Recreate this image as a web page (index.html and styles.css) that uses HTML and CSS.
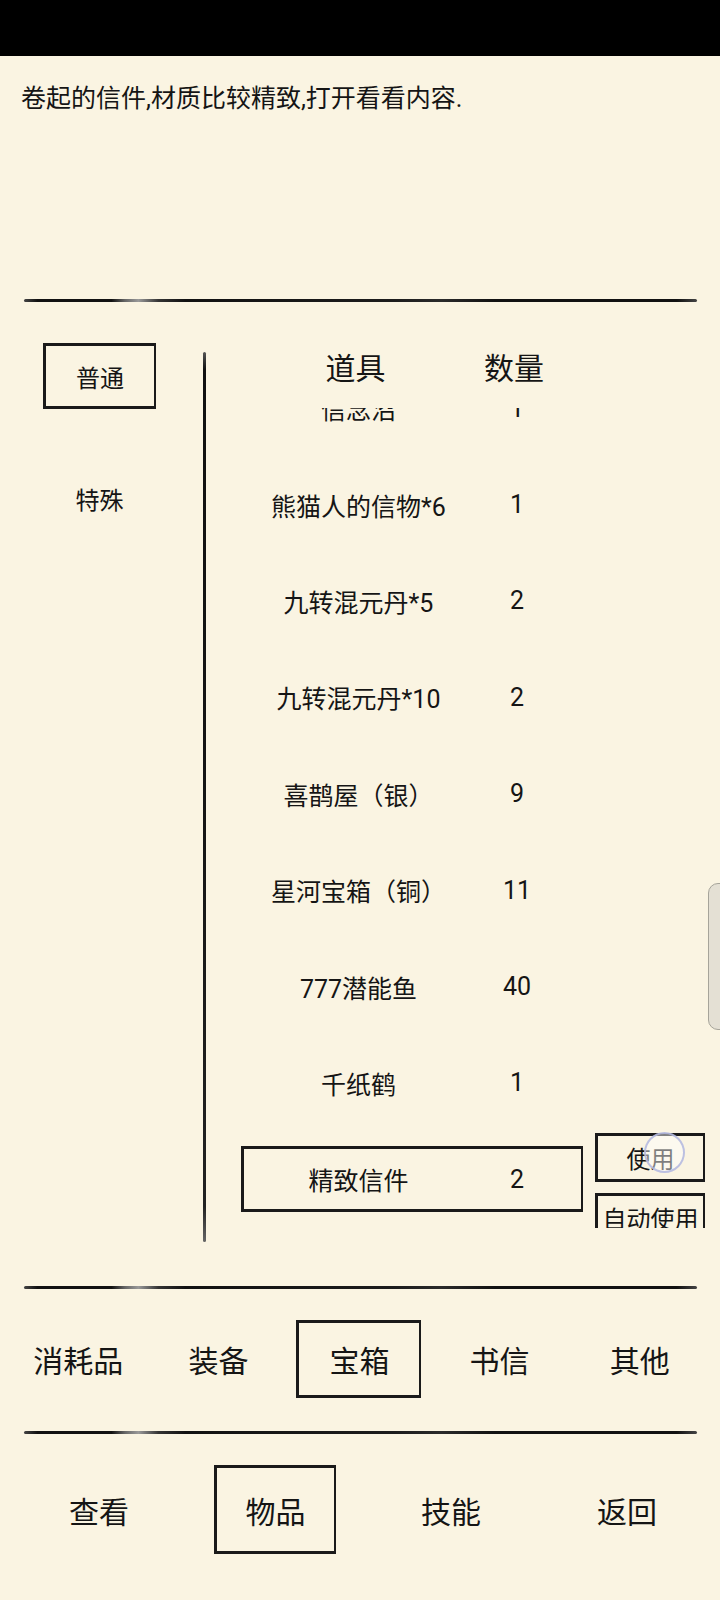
FILE: index.html
```html
<!DOCTYPE html>
<html lang="zh-CN">
<head>
  <meta charset="UTF-8">
  <title>物品 - 宝箱</title>
  <link rel="stylesheet" href="styles.css">
</head>
<body>
  <div class="status-bar"></div>

  <div class="description">卷起的信件,材质比较精致,打开看看内容.</div>

  <div class="divider"></div>

  <div class="main">
    <div class="category-list">
      <div class="category active">普通</div>
      <div class="category">特殊</div>
    </div>

    <div class="vertical-line"></div>

    <div class="items">
      <div class="items-header">
        <span>道具</span>
        <span>数量</span>
      </div>

      <div class="items-viewport">
        <div class="items-list">
          <div class="item-row">
            <div class="item-cell"><span>信念沼</span><span>1</span></div>
          </div>
          <div class="item-row">
            <div class="item-cell"><span>熊猫人的信物*6</span><span>1</span></div>
          </div>
          <div class="item-row">
            <div class="item-cell"><span>九转混元丹*5</span><span>2</span></div>
          </div>
          <div class="item-row">
            <div class="item-cell"><span>九转混元丹*10</span><span>2</span></div>
          </div>
          <div class="item-row">
            <div class="item-cell"><span>喜鹊屋（银）</span><span>9</span></div>
          </div>
          <div class="item-row">
            <div class="item-cell"><span>星河宝箱（铜）</span><span>11</span></div>
          </div>
          <div class="item-row">
            <div class="item-cell"><span>777潜能鱼</span><span>40</span></div>
          </div>
          <div class="item-row">
            <div class="item-cell"><span>千纸鹤</span><span>1</span></div>
          </div>
          <div class="item-row">
            <div class="item-cell selected"><span>精致信件</span><span>2</span></div>
            <div class="item-actions">
              <button class="action-button">使用<span class="touch-dot"></span></button>
              <button class="action-button">自动使用</button>
            </div>
          </div>
        </div>
      </div>
    </div>
  </div>

  <div class="divider"></div>

  <div class="tabs">
    <div class="tab">消耗品</div>
    <div class="tab">装备</div>
    <div class="tab active">宝箱</div>
    <div class="tab">书信</div>
    <div class="tab">其他</div>
  </div>

  <div class="divider"></div>

  <div class="nav">
    <div class="nav-item">查看</div>
    <div class="nav-item active">物品</div>
    <div class="nav-item">技能</div>
    <div class="nav-item">返回</div>
  </div>

  <div class="scroll-handle"></div>
</body>
</html>
```

FILE: styles.css
```css
html,
body {
  margin: 0;
  padding: 0;
}

body {
  font-family: Roboto, "Noto Sans CJK SC", sans-serif;
  background-color: #faf4e2;
  color: #151515;
  width: 720px;
  height: 1600px;
  overflow: hidden;
}

.status-bar {
  height: 56px;
  background-color: #000;
}

.description {
  height: 243px;
  box-sizing: border-box;
  padding: 27px 0 0 21px;
  font-size: 25px;
  line-height: 32px;
}

.divider {
  height: 3px;
  margin: 0 23px 0 24px;
  border-radius: 2px;
  background: linear-gradient(90deg,
    #444 0%, #111 2%, #111 13%, #666 15%, #999 17%, #333 20%,
    #111 24%, #1c1c1c 55%, #2a2a2a 62%, #111 70%, #111 97%, #444 100%);
}

/* middle part: categories + item list */
.main {
  height: 984px;
  display: flex;
}

.category-list {
  width: 203px;
  display: flex;
  flex-direction: column;
  align-items: flex-start;
}

.category {
  width: 113px;
  height: 66px;
  margin-left: 43px;
  box-sizing: border-box;
  display: flex;
  align-items: center;
  justify-content: center;
  font-size: 24px;
  border: 3px solid transparent;
}

.category:first-child {
  margin-top: 41px;
}

.category + .category {
  margin-top: 56px;
}

.category.active,
.item-cell.selected,
.action-button,
.tab.active,
.nav-item.active {
  border-style: solid;
  border-color: #1a1a1a;
  border-width: 3px 2px 3px 3px;
}

.vertical-line {
  width: 3px;
  height: 890px;
  margin-top: 50px;
  border-radius: 2px;
  background: linear-gradient(180deg, #555 0%, #111 2%, #151515 50%, #222 96%, #666 100%);
}

.items {
  flex: 1;
  display: flex;
  flex-direction: column;
}

.items-header {
  height: 106px;
  box-sizing: border-box;
  padding: 47px 0 0 35px;
  display: grid;
  grid-template-columns: 229px 88px;
  font-size: 30px;
  line-height: 40px;
  text-align: center;
}

.items-viewport {
  height: 820px;
  overflow: hidden;
}

.items-list {
  margin-top: -48px;
}

.item-row {
  height: 96.4px;
  padding-left: 35px;
  display: flex;
  align-items: center;
}

.item-cell {
  width: 342px;
  height: 66px;
  box-sizing: border-box;
  border: 3px solid transparent;
  display: grid;
  grid-template-columns: 229px 88px;
  align-items: center;
  text-align: center;
  font-size: 25px;
  white-space: nowrap;
}

.item-actions {
  width: 110px;
  margin: 16px 0 0 12px;
  display: flex;
  flex-direction: column;
  gap: 11px;
}

.action-button {
  position: relative;
  height: 49px;
  padding: 0;
  background: transparent;
  color: inherit;
  font-family: inherit;
  font-size: 24px;
  white-space: nowrap;
}

.touch-dot {
  position: absolute;
  left: 46px;
  top: -4px;
  width: 37px;
  height: 37px;
  border-radius: 50%;
  border: 2px solid rgba(176, 182, 222, 0.85);
  background-color: rgba(255, 255, 255, 0.45);
}

/* bottom tabs */
.tabs {
  height: 142px;
  box-sizing: border-box;
  padding: 0 10px 0 8px;
  display: grid;
  grid-template-columns: repeat(5, 1fr);
}

.tab {
  justify-self: center;
  width: 125px;
  height: 78px;
  margin-top: 31px;
  box-sizing: border-box;
  border: 3px solid transparent;
  display: flex;
  align-items: center;
  justify-content: center;
  font-size: 30px;
}

.nav {
  height: 166px;
  box-sizing: border-box;
  padding: 0 5px 0 11px;
  display: grid;
  grid-template-columns: repeat(4, 1fr);
}

.nav-item {
  justify-self: center;
  width: 122px;
  height: 89px;
  margin-top: 31px;
  box-sizing: border-box;
  border: 3px solid transparent;
  display: flex;
  align-items: center;
  justify-content: center;
  font-size: 30px;
}

.scroll-handle {
  position: absolute;
  left: 708px;
  top: 883px;
  width: 20px;
  height: 145px;
  border: 1px solid #a6a49a;
  border-radius: 10px 0 0 10px;
  background-color: #e4e0d4;
}
```
